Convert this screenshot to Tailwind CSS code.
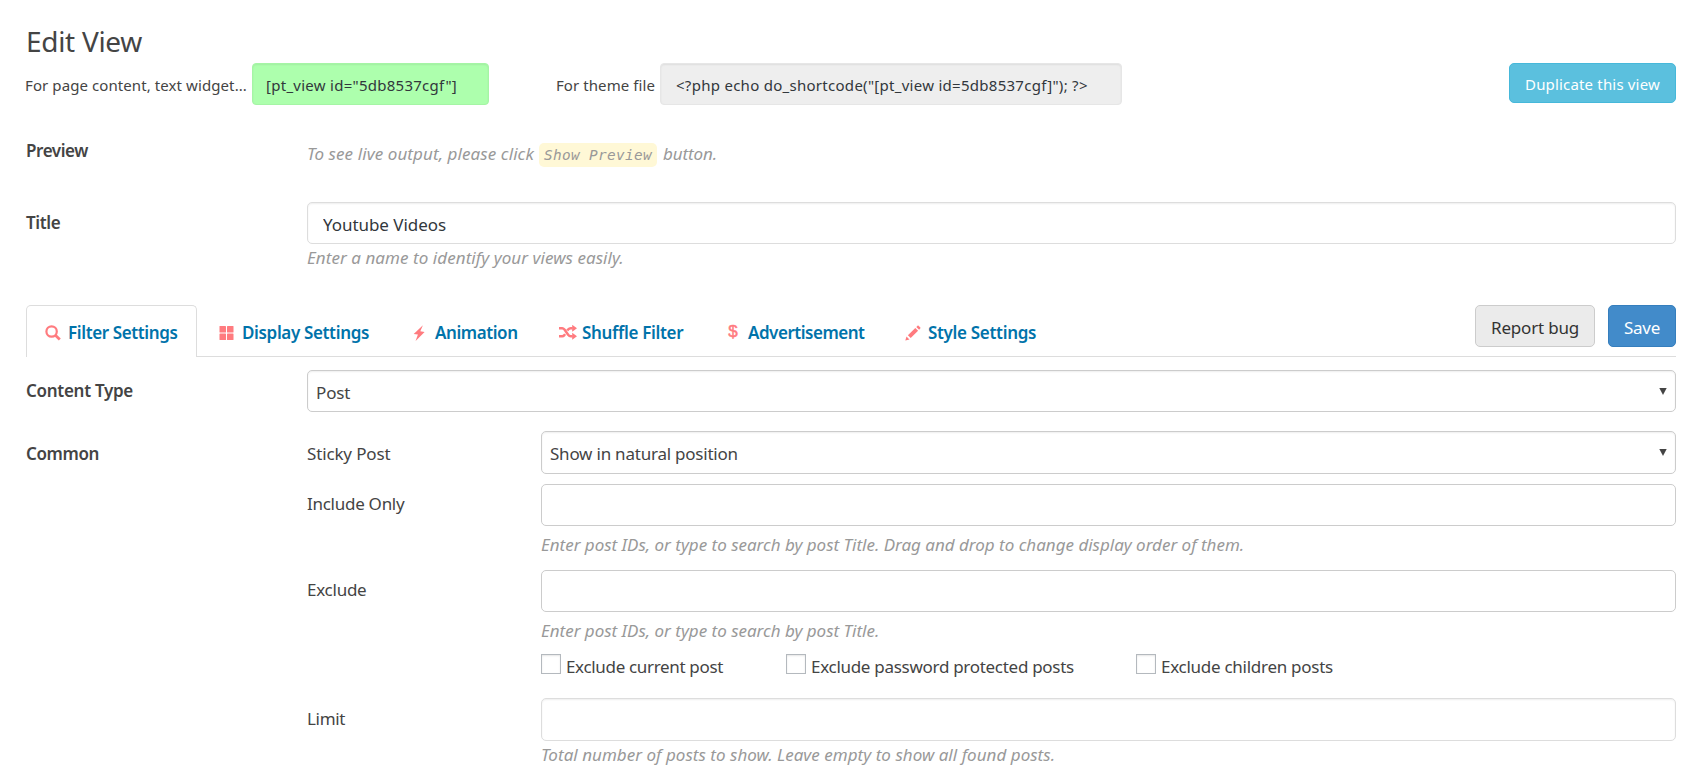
<!DOCTYPE html>
<html lang="en">
<head>
    <meta charset="UTF-8">
    <meta name="viewport" content="width=device-width, initial-scale=1.0">
    <title>Edit View</title>
    <script src="https://cdn.jsdelivr.net/npm/@tailwindcss/browser@4"></script>
</head>
<body class="bg-white pl-[26px] pr-6 pt-[23px] font-['Noto_Sans',sans-serif] text-[17px] leading-6 text-[#444] overflow-hidden">

    <!-- Header -->
    <h1 class="text-[28px] leading-9 tracking-[-0.3px]">Edit View</h1>
    <div class="mt-1 flex h-[42px] items-center text-[15px]">
        <span class="-ml-px w-[227px] shrink-0 pt-0.5 tracking-[0.09px] whitespace-nowrap">For page content, text widget...</span>
        <div class="h-[42px] w-[237px] rounded-[4px] border border-[#a5f5a5] bg-[#adffad] px-[13px] pt-[9px] tracking-[0.27px] text-[#32373c] shadow-[inset_0_1px_2px_rgba(0,0,0,0.07)]">[pt_view id="5db8537cgf"]</div>
        <span class="ml-[67px] w-[104px] shrink-0 pt-0.5 tracking-[0.08px] whitespace-nowrap">For theme file</span>
        <div class="h-[42px] w-[462px] rounded-[4px] border border-[#e6e6e6] bg-[#eee] px-[15px] pt-[9px] tracking-[0.28px] text-[#32373c] whitespace-nowrap shadow-[inset_0_1px_2px_rgba(0,0,0,0.07)]">&lt;?php echo do_shortcode("[pt_view id=5db8537cgf]"); ?&gt;</div>
        <button class="ml-auto h-10 w-[167px] self-start rounded-[5px] border border-[#46b8da] bg-[#5bc0de] pt-0.5 tracking-[0.17px] text-white">Duplicate this view</button>
    </div>

    <!-- Preview -->
    <div class="mt-[34px] grid grid-cols-[281px_1fr]">
        <div class="font-semibold tracking-[-0.42px]">Preview</div>
        <div class="flex pt-[3px] text-[#999] italic">
            <span class="w-[232px] tracking-[0.09px]">To see live output, please click</span>
            <code class="mt-px h-6 w-[118px] rounded-[5px] bg-[#fff8d6] text-center font-['DejaVu_Sans_Mono',monospace] text-[14.4px] leading-6 tracking-[0.35px]">Show Preview</code>
            <span class="ml-1.5 tracking-[-0.1px]">button.</span>
        </div>
    </div>

    <!-- Title -->
    <div class="mt-[35px] grid grid-cols-[281px_1fr]">
        <label for="view-title" class="pt-[9px] font-semibold tracking-[-0.35px]">Title</label>
        <div>
            <input id="view-title" type="text" value="Youtube Videos" class="block h-[42px] w-full rounded-[5px] border border-[#ddd] px-[15px] pt-0.5 tracking-[-0.05px] text-[#32373c] shadow-[inset_0_1px_2px_rgba(0,0,0,0.07)]">
            <p class="mt-0.5 tracking-[0.06px] text-[#999] italic">Enter a name to identify your views easily.</p>
        </div>
    </div>

    <!-- Tabs -->
    <div class="mt-[35px] flex h-[52px] border-b border-[#ddd] font-semibold text-[#0073aa]">
        <a class="-mb-px flex w-[171px] items-start rounded-t-[5px] border border-b-0 border-[#ddd] bg-white pt-[15px] pl-[18px]">
            <svg class="mt-1 mr-[7px] size-4" viewBox="0 0 16 16" fill="none" stroke="#ff7b7f"><circle cx="6.6" cy="6.5" r="5.2" stroke-width="2.2"/><path d="M10.4 10.3l4.4 4.2" stroke-width="2.8"/></svg>
            <span class="tracking-[-0.38px]">Filter Settings</span>
        </a>
        <a class="ml-[22px] flex items-start pt-4">
            <svg class="mt-[5px] mr-2 h-3.5 w-[15px]" viewBox="0 0 15 14" fill="#ff7b7f"><rect x="0.5" width="6.5" height="6.5" rx="0.6"/><rect x="8" width="6.5" height="6.5" rx="0.6"/><rect x="0.5" y="7.5" width="6.5" height="6.5" rx="0.6"/><rect x="8" y="7.5" width="6.5" height="6.5" rx="0.6"/></svg>
            <span class="w-[127px] tracking-[-0.35px] whitespace-nowrap">Display Settings</span>
        </a>
        <a class="ml-[44px] flex items-start pt-4">
            <svg class="mt-[3.5px] mr-2.5 h-4 w-[12px]" viewBox="0 0 12 16" fill="#ff7b7f"><path d="M9.9.2L.7 8.9l4.2.6L2.6 15.9 11.6 6.9 7.3 6.3z"/></svg>
            <span class="w-[83px] tracking-[-0.42px] whitespace-nowrap">Animation</span>
        </a>
        <a class="ml-[41px] flex items-start pt-4">
            <svg class="mt-1 mr-[5px] h-[15px] w-[18px]" viewBox="0 0 18 15" fill="none" stroke="#ff7b7f" stroke-width="2.5"><path d="M0 3.2h3.2c1 0 1.6.5 2.3 1.3l3.6 5.2c.8 1 1.5 1.6 2.6 1.6h2M0 11.3h3.2c1 0 1.6-.5 2.2-1.2l.7-1M8.3 5.6l.8-1.1c.8-.9 1.5-1.3 2.6-1.3h2"/><path d="M13.2-.2l4.8 3.5-4.8 3.5zM13.2 7.8l4.8 3.5-4.8 3.5z" fill="#ff7b7f" stroke="none"/></svg>
            <span class="w-[102px] tracking-[-0.33px] whitespace-nowrap">Shuffle Filter</span>
        </a>
        <a class="ml-[44px] flex items-start pt-4">
            <span class="-mt-px mr-[10px] w-2.5 text-center font-['Liberation_Sans',sans-serif] text-[17px] font-normal text-[#ff7b7f] [-webkit-text-stroke:0.5px_#ff7b7f]">$</span>
            <span class="w-[117px] tracking-[-0.48px] whitespace-nowrap">Advertisement</span>
        </a>
        <a class="ml-[40px] flex items-start pt-4">
            <svg class="mt-1 mr-[7px] h-4 w-[16px]" viewBox="0 0 16 16" fill="#ff7b7f"><path d="M.3 15.6l1.2-4.2 3 3zM2.9 10.2l7.4-7.2 2.8 2.8-7.4 7.2zM11.3 2L12.4.9c.4-.4.9-.4 1.3 0l1.5 1.4c.4.4.4.9 0 1.3l-1.1 1.1z"/></svg>
            <span class="tracking-[-0.32px] whitespace-nowrap">Style Settings</span>
        </a>
        <div class="ml-auto flex gap-[13px] font-normal">
            <button class="h-[42px] w-[120px] rounded-[5px] border border-[#ccc] bg-[#ebebeb] pt-1 tracking-[-0.19px] text-[#333]">Report bug</button>
            <button class="h-[42px] w-[68px] rounded-[5px] border border-[#357ebd] bg-[#428bca] pt-1 tracking-[-0.3px] text-white">Save</button>
        </div>
    </div>

    <!-- Content type -->
    <div class="mt-[13px] grid grid-cols-[281px_1fr]">
        <label for="content-type" class="pt-[9px] font-semibold tracking-[-0.29px]">Content Type</label>
        <div class="relative">
            <select id="content-type" class="block h-[42px] w-full appearance-none rounded-[5px] border border-[#ccc] bg-white px-2 pt-[3px] text-[#444] tracking-[-0.15px] shadow-[inset_0_1px_2px_rgba(0,0,0,0.07)]"><option>Post</option></select>
            <svg class="pointer-events-none absolute top-[18px] right-[9px] h-[7px] w-2" viewBox="0 0 8 7" fill="#444"><path d="M.3 0h7.4L4 7z"/></svg>
        </div>
    </div>

    <!-- Common -->
    <div class="mt-[19px] grid grid-cols-[281px_1fr]">
        <div class="pt-[11px] font-semibold tracking-[-0.39px]">Common</div>
        <div>
            <div class="grid grid-cols-[234px_1fr]">
                <label for="sticky" class="pt-[11px] tracking-[-0.15px]">Sticky Post</label>
                <div class="relative">
                    <select id="sticky" class="block h-[43px] w-full appearance-none rounded-[5px] border border-[#ccc] bg-white px-2 pt-[3px] text-[#444] tracking-[-0.22px] shadow-[inset_0_1px_2px_rgba(0,0,0,0.07)]"><option>Show in natural position</option></select>
                    <svg class="pointer-events-none absolute top-[18px] right-[9px] h-[7px] w-2" viewBox="0 0 8 7" fill="#444"><path d="M.3 0h7.4L4 7z"/></svg>
                </div>
            </div>

            <div class="mt-2.5 grid grid-cols-[234px_1fr]">
                <label for="include" class="pt-2 tracking-[-0.27px]">Include Only</label>
                <div>
                    <input id="include" type="text" class="block h-[42px] w-full rounded-[5px] border border-[#ccc]">
                    <p class="mt-[7px] tracking-[-0.01px] text-[#999] italic">Enter post IDs, or type to search by post Title. Drag and drop to change display order of them.</p>
                </div>
            </div>

            <div class="mt-[13px] grid grid-cols-[234px_1fr]">
                <label for="exclude" class="pt-2 tracking-[-0.25px]">Exclude</label>
                <div>
                    <input id="exclude" type="text" class="block h-[42px] w-full rounded-[5px] border border-[#ccc]">
                    <p class="mt-[7px] tracking-[-0.01px] text-[#999] italic">Enter post IDs, or type to search by post Title.</p>
                    <div class="mt-[11px] flex h-6">
                        <label class="flex w-[245px] tracking-[-0.33px]">
                            <input type="checkbox" class="mr-[5px] h-5 w-5 appearance-none border border-[#b4b9be] bg-white shadow-[inset_0_1px_2px_rgba(0,0,0,0.1)]"><span class="pt-px">Exclude current post</span>
                        </label>
                        <label class="flex w-[350px] tracking-[-0.29px]">
                            <input type="checkbox" class="mr-[5px] h-5 w-5 appearance-none border border-[#b4b9be] bg-white shadow-[inset_0_1px_2px_rgba(0,0,0,0.1)]"><span class="pt-px">Exclude password protected posts</span>
                        </label>
                        <label class="flex tracking-[-0.27px]">
                            <input type="checkbox" class="mr-[5px] h-5 w-5 appearance-none border border-[#b4b9be] bg-white shadow-[inset_0_1px_2px_rgba(0,0,0,0.1)]"><span class="pt-px">Exclude children posts</span>
                        </label>
                    </div>
                </div>
            </div>

            <div class="mt-5 grid grid-cols-[234px_1fr]">
                <label for="limit" class="pt-[9px] tracking-[-0.3px]">Limit</label>
                <div>
                    <input id="limit" type="text" class="block h-[43px] w-full rounded-[5px] border border-[#ddd] shadow-[inset_0_1px_2px_rgba(0,0,0,0.07)]">
                    <p class="mt-0.5 tracking-[0.03px] text-[#999] italic">Total number of posts to show. Leave empty to show all found posts.</p>
                </div>
            </div>
        </div>
    </div>

</body>
</html>
